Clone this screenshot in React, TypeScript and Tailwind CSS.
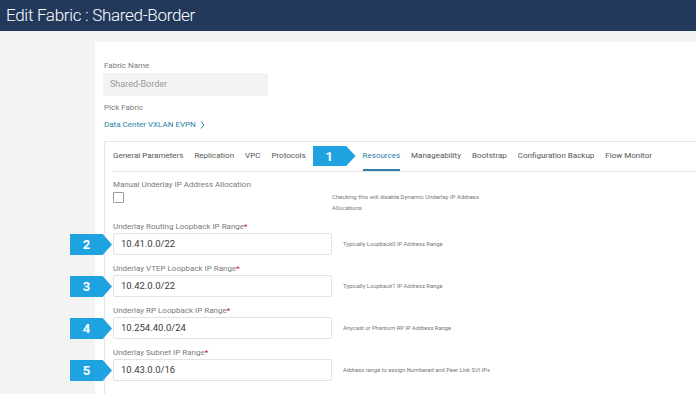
import React from 'react';

const tabs = ['General Parameters', 'Replication', 'VPC', 'Protocols'];
const tabsAfter = ['Manageability', 'Bootstrap', 'Configuration Backup', 'Flow Monitor'];

const fields = [
  { n: '2', label: 'Underlay Routing Loopback IP Range', value: '10.41.0.0/22', help: 'Typically Loopback0 IP Address Range' },
  { n: '3', label: 'Underlay VTEP Loopback IP Range', value: '10.42.0.0/22', help: 'Typically Loopback1 IP Address Range' },
  { n: '4', label: 'Underlay RP Loopback IP Range', value: '10.254.40.0/24', help: 'Anycast or Phantom RP IP Address Range' },
  { n: '5', label: 'Underlay Subnet IP Range', value: '10.43.0.0/16', help: 'Address range to assign Numbered and Peer Link SVI IPs' },
];

function Step({ n, className }: { n: string; className?: string }) {
  return (
    <div
      className={`flex items-center bg-[#1ea3e0] text-white font-bold text-[13px] [clip-path:polygon(0_0,78%_0,100%_50%,78%_100%,0_100%)] ${className ?? ''}`}
    >
      <span className="w-[78%] text-center leading-none">{n}</span>
    </div>
  );
}

export default function App() {
  return (
    <div className="w-[696px] h-[394px] overflow-hidden bg-[#f3f3f3] font-['Roboto',sans-serif] flex flex-col">
      <div className="h-[31px] shrink-0 bg-[#22395c] flex items-center px-[6px]">
        <h1 className="text-white text-[17px] font-light tracking-[-0.3px]">Edit Fabric : Shared-Border</h1>
      </div>

      <div className="flex flex-1 pt-[11px]">
        <div className="w-[95px] shrink-0" />
        <div className="flex-1 bg-white pl-[9px] pt-[18px] flex flex-col">
          <label className="text-[8px] leading-[12px] text-[#7a7a7a]">Fabric Name</label>
          <div className="mt-[1px] -ml-[1px] w-[165px] h-[23px] bg-[#f3f3f3] rounded-[2px] flex items-center px-[7px] text-[9px] text-[#999]">
            Shared-Border
          </div>
          <label className="mt-[6px] text-[8px] leading-[12px] text-[#7a7a7a]">Pick Fabric</label>
          <div className="mt-[5px] text-[8px] leading-[12px] text-[#2c7fa8] flex items-center gap-[4px]">
            Data Center VXLAN EVPN
            <svg width="5" height="8" viewBox="0 0 5 8" fill="none" stroke="#2c7fa8" strokeWidth="1">
              <path d="M1 0.5 L4 4 L1 7.5" />
            </svg>
          </div>

          <div className="mt-[10px] flex-1 border-l border-t border-[#e6e6e6] pl-[8px]">
            <div className="h-[30px] flex items-stretch gap-[11px] border-b border-[#e3e3e3] text-[8px] text-[#555]">
              {tabs.map((t) => (
                <div key={t} className="flex items-center pb-[1px]">{t}</div>
              ))}
              <div className="flex items-center -mx-[4px] pb-[1px]">
                <Step n="1" className="w-[43px] h-[20px]" />
              </div>
              <div className="flex items-center text-[#2c7fa8] border-b-2 border-[#2c7fa8] pt-[1px]">Resources</div>
              {tabsAfter.map((t) => (
                <div key={t} className="flex items-center pb-[1px]">{t}</div>
              ))}
            </div>

            <div className="pt-[7px] flex flex-col">
              <div className="flex">
                <div className="w-[219px] shrink-0">
                  <div className="text-[8px] leading-[12px] text-[#7a7a7a]">Manual Underlay IP Address Allocation</div>
                  <div className="mt-[1px] w-[11px] h-[11px] border border-[#9a9a9a] rounded-[1px] bg-white" />
                </div>
                <div className="pt-[12px] text-[6px] leading-[11px] text-[#777]">
                  <div>Checking this will disable Dynamic Underlay IP Address</div>
                  <div>Allocations</div>
                </div>
              </div>

              {fields.map((f) => (
                <div key={f.n} className="mt-[8px]">
                  <div className="text-[8px] leading-[12px] text-[#7a7a7a]">
                    {f.label}
                    <span className="text-[#d0021b]">*</span>
                  </div>
                  <div className="flex items-center">
                    <div className="relative w-[219px] h-[22px] shrink-0 border border-[#e2e2e2] rounded-[2px] flex items-center px-[7px] text-[9.5px] text-[#3a3a3a]">
                      {f.value}
                      <Step n={f.n} className="absolute left-[-44px] top-[0px] w-[42px] h-[21px]" />
                    </div>
                    <div className="ml-[11px] text-[5.8px] text-[#777]">{f.help}</div>
                  </div>
                </div>
              ))}
            </div>
          </div>
        </div>
      </div>
    </div>
  );
}
